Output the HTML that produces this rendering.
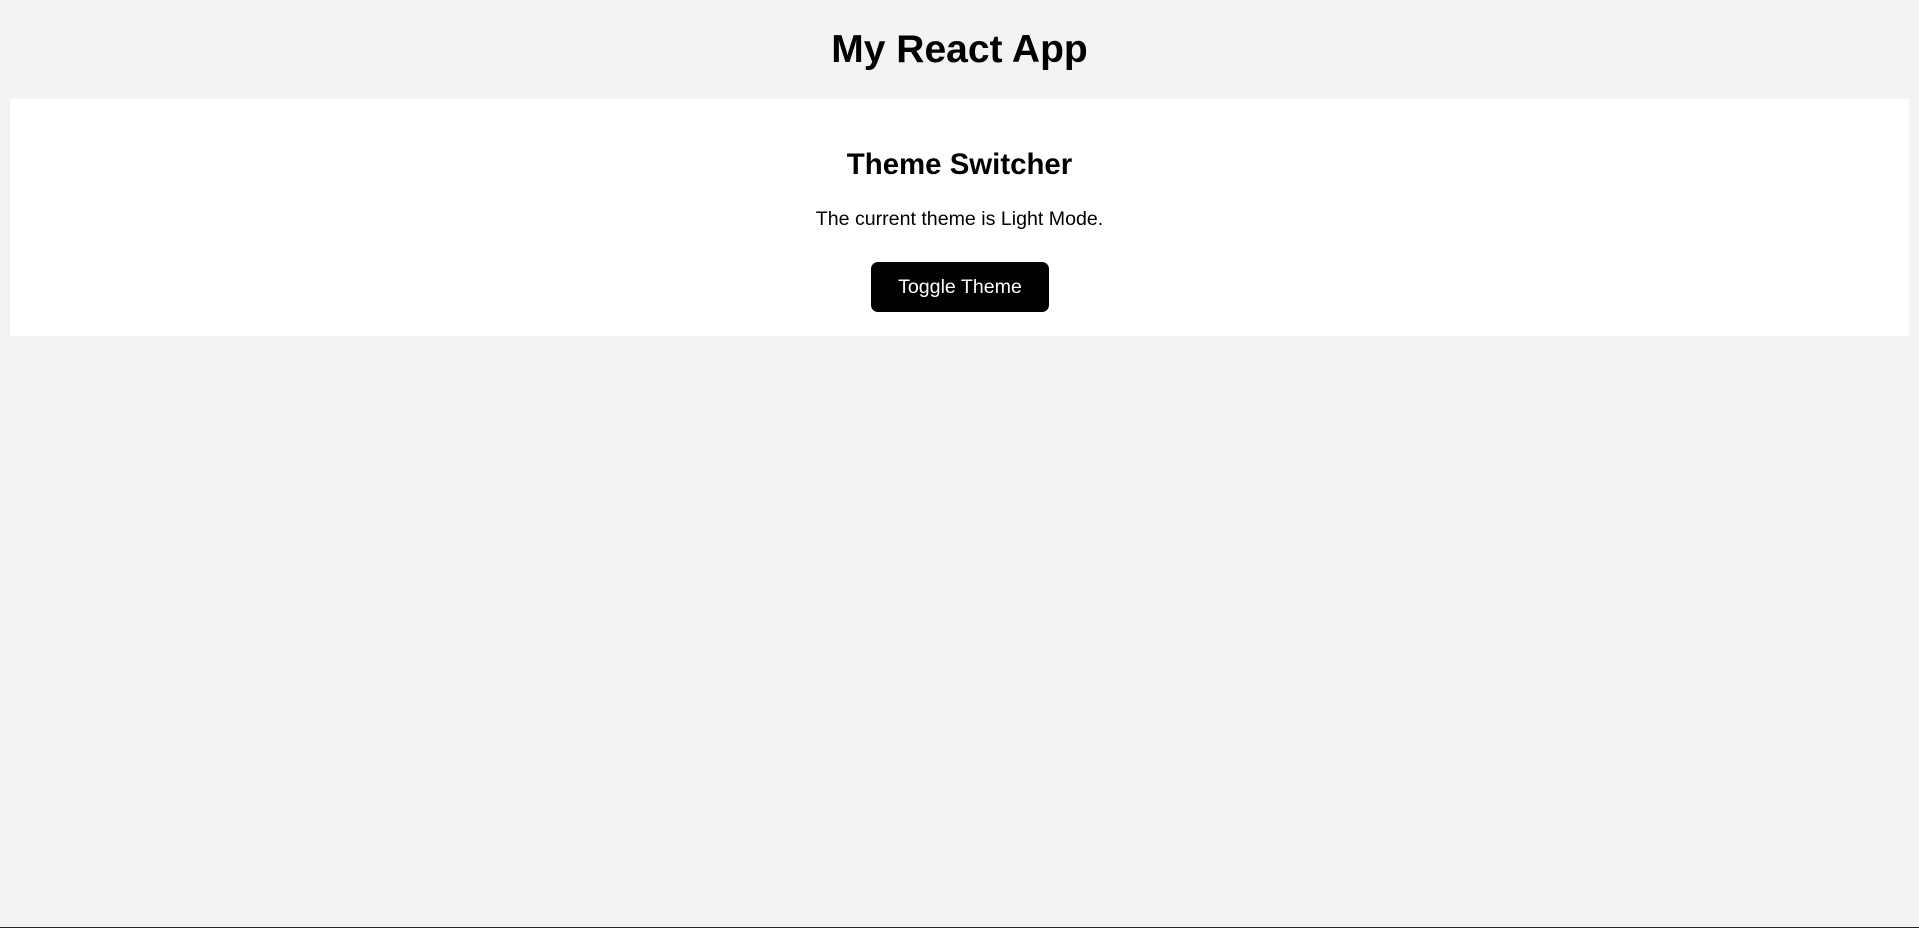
<!DOCTYPE html>
<html><head><meta charset="utf-8"><style>
html,body{margin:0;padding:0;}
body{width:1919px;height:928px;background:#f3f3f3;position:relative;overflow:hidden;font-family:"Liberation Sans",Arial,sans-serif;color:#000;}
.t{position:absolute;left:0;width:1919px;text-align:center;line-height:1;white-space:nowrap;}
#panel{position:absolute;left:10px;top:99px;width:1899px;height:237px;background:#fff;}
#btn{position:absolute;left:871px;top:262px;width:178px;height:50px;background:#000;color:#fff;border-radius:7px;text-align:center;line-height:50px;font-size:19.6px;}
#line{position:absolute;left:0;top:927px;width:1919px;height:1px;background:#222;}
</style></head><body>
<div class="t" style="top:30px;font-size:39px;font-weight:bold;">My React App</div>
<div id="panel"></div>
<div class="t" style="top:150px;font-size:29.4px;font-weight:bold;">Theme Switcher</div>
<div class="t" style="top:210px;font-size:19.6px;">The current theme is Light Mode.</div>
<div id="btn">Toggle Theme</div>
<div id="line"></div>
</body></html>
